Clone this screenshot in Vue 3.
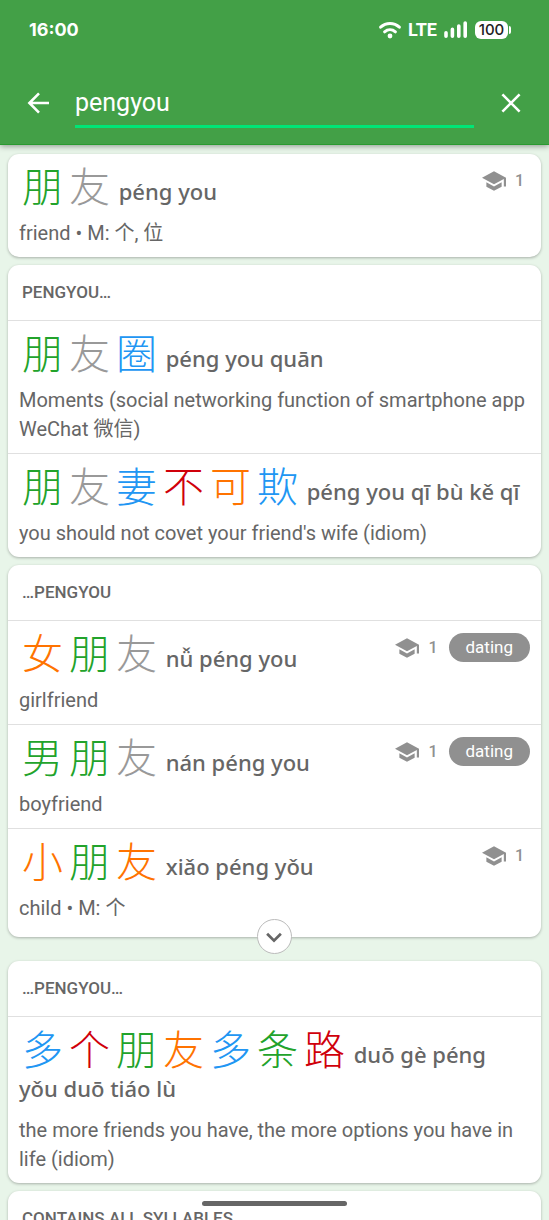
<script setup>
import { ref } from 'vue'

const query = ref('pengyou')

const peng = ['朋', 't2']
const you = ['友', 't5']

const groups = [
  {
    title: '',
    entries: [{ hanzi: [peng, you], pinyin: 'péng you', meaning: 'friend • M: 个, 位', level: 1 }]
  },
  {
    title: 'PENGYOU…',
    entries: [
      {
        hanzi: [peng, you, ['圈', 't1']],
        pinyin: 'péng you quān',
        meaning: 'Moments (social networking function of smartphone app WeChat 微信)'
      },
      {
        hanzi: [peng, you, ['妻', 't1'], ['不', 't4'], ['可', 't3'], ['欺', 't1']],
        pinyin: 'péng you qī bù kě qī',
        meaning: "you should not covet your friend's wife (idiom)"
      }
    ]
  },
  {
    title: '…PENGYOU',
    expandable: true,
    entries: [
      { hanzi: [['女', 't3'], peng, you], pinyin: 'nǚ péng you', meaning: 'girlfriend', level: 1, tag: 'dating' },
      { hanzi: [['男', 't2'], peng, you], pinyin: 'nán péng you', meaning: 'boyfriend', level: 1, tag: 'dating' },
      { hanzi: [['小', 't3'], peng, ['友', 't3']], pinyin: 'xiǎo péng yǒu', meaning: 'child • M: 个', level: 1 }
    ]
  },
  {
    title: '…PENGYOU…',
    entries: [
      {
        hanzi: [['多', 't1'], ['个', 't4'], peng, ['友', 't3'], ['多', 't1'], ['条', 't2'], ['路', 't4']],
        pinyin: 'duō gè péng yǒu duō tiáo lù',
        meaning: 'the more friends you have, the more options you have in life (idiom)'
      }
    ]
  },
  { title: 'CONTAINS ALL SYLLABLES', entries: [] }
]
</script>

<template>
  <div class="app">
    <header class="top">
      <div class="status">
        <span class="clock">16:00</span>
        <div class="indicators">
          <svg class="wifi" viewBox="0 0 24 18" aria-hidden="true">
            <path d="M2.6 6.2C8 1.2 16 1.2 21.4 6.2" />
            <path d="M6.6 10.8C9.8 8 14.2 8 17.4 10.8" />
            <circle cx="12" cy="15" r="2.4" />
          </svg>
          <span class="network">LTE</span>
          <svg class="signal" viewBox="0 0 24 18" aria-hidden="true">
            <path d="M2 11.8V15.2M8.4 8.4V15.2M14.8 5V15.2M21.2 2V15.2" />
          </svg>
          <span class="battery">100</span>
        </div>
      </div>
      <form class="search" role="search" @submit.prevent>
        <button type="button" class="icon" aria-label="Back">
          <svg viewBox="0 0 24 24"><path d="M23 12H3.5M13 2.4L3.4 12L13 21.6" /></svg>
        </button>
        <input v-model="query" class="field" type="text" aria-label="Search" />
        <button type="button" class="icon" aria-label="Clear" @click="query = ''">
          <svg viewBox="0 0 24 24"><path d="M3.4 3.4L20.6 20.6M20.6 3.4L3.4 20.6" /></svg>
        </button>
      </form>
    </header>

    <main class="results">
      <section v-for="(group, g) in groups" :key="g" class="card" :class="{ expandable: group.expandable }">
        <h2 v-if="group.title" class="heading">{{ group.title }}</h2>
        <article v-for="(entry, e) in group.entries" :key="e" class="entry">
          <div class="main">
            <h3 class="word">
              <span v-for="(h, i) in entry.hanzi" :key="i" class="hanzi" :class="h[1]" lang="zh">{{ h[0] }}</span>
              {{ entry.pinyin }}
            </h3>
            <div v-if="entry.level" class="meta">
              <svg class="cap" viewBox="1 3 22 18" aria-hidden="true">
                <path d="M5 13.18v4L12 21l7-3.82v-4L12 17l-7-3.82zM12 3L1 9l11 6 9-4.91V17h2V9L12 3z" />
              </svg>
              <span class="level">{{ entry.level }}</span>
              <a v-if="entry.tag" href="#" class="tag">{{ entry.tag }}</a>
            </div>
          </div>
          <p class="meaning">{{ entry.meaning }}</p>
        </article>
        <button v-if="group.expandable" type="button" class="more" aria-label="Show more">
          <svg viewBox="0 0 24 24"><path d="M4.5 8.5L12 16L19.5 8.5" /></svg>
        </button>
      </section>
    </main>
    <div class="home"></div>
  </div>
</template>

<style>
body {
  background: #e8f5e9;
}
</style>

<style scoped>
.app {
  height: 100vh;
  display: flex;
  flex-direction: column;
  overflow: hidden;
  background: #e8f5e9;
  color: #666;
  font-family: Roboto, 'Noto Sans', 'Noto Sans CJK SC', sans-serif;
}
.top {
  flex: none;
  position: relative;
  box-sizing: border-box;
  height: 145px;
  background: #43a047;
  border-bottom: 1px solid #2a9a30;
  color: #fff;
  box-shadow: 0 1px 6px rgba(0, 0, 0, 0.4);
}
.status {
  height: 60px;
  padding: 0 41px 0 29px;
  display: flex;
  align-items: center;
  justify-content: space-between;
}
.clock {
  font: 700 18px/24px Inter, Roboto, sans-serif;
}
.indicators {
  display: flex;
  align-items: center;
}
svg {
  display: block;
  fill: none;
  stroke: currentColor;
  stroke-width: 2.6;
}
.wifi {
  width: 24px;
  height: 18px;
  stroke-linecap: round;
  stroke-width: 3;
}
.wifi circle {
  fill: currentColor;
  stroke: none;
}
.network {
  margin: 0 7px 0 6px;
  font: 700 18px/24px Roboto, sans-serif;
}
.signal {
  width: 24px;
  height: 18px;
  stroke-width: 3.6;
  stroke-linecap: round;
}
.battery {
  position: relative;
  margin-left: 7px;
  width: 33px;
  border-radius: 6px;
  background: #fff;
  color: #222;
  font: 500 15px/18px Inter, Roboto, sans-serif;
  text-align: center;
}
.battery::after {
  content: '';
  position: absolute;
  left: 34px;
  top: 5px;
  width: 2px;
  height: 8px;
  border-radius: 0 2px 2px 0;
  background: #fff;
}
.search {
  display: flex;
  align-items: center;
  padding: 18px 26px 0;
}
.icon {
  flex: none;
  padding: 0;
  border: 0;
  background: none;
  color: #fff;
}
.icon svg {
  width: 24px;
  height: 24px;
}
.field {
  flex: 1;
  min-width: 0;
  height: 50px;
  box-sizing: border-box;
  margin: 0 25px;
  padding: 2px 0 0;
  border: 0;
  border-bottom: 3px solid #00e676;
  outline: 0;
  background: none;
  color: #fff;
  font: 400 25px/32px Roboto, sans-serif;
}
.results {
  flex: 1;
  min-height: 0;
  overflow-y: auto;
  scrollbar-width: none;
  padding: 9px 8px 0;
  display: flex;
  flex-direction: column;
  gap: 8px;
}
.card {
  flex: none;
  position: relative;
  background: #fff;
  border-radius: 11px;
  box-shadow: 0 1px 3px rgba(0, 0, 0, 0.28);
}
.expandable {
  padding-bottom: 5px;
  margin-bottom: 16px;
}
.heading {
  margin: 0;
  padding: 0 14px;
  font-size: 17px;
  font-weight: 500;
  line-height: 55px;
}
.entry {
  padding: 8px 11px 9px;
}
.heading + .entry,
.entry + .entry {
  border-top: 1px solid #e0e0e0;
}
.main {
  display: flex;
  align-items: flex-start;
}
.word {
  flex: 1;
  margin: 0;
  font: 500 22px/34px 'Noto Sans', Roboto, sans-serif;
}
.hanzi {
  display: inline-block;
  width: 47px;
  font: 300 41px/44px 'Noto Sans CJK SC', sans-serif;
  text-align: center;
  vertical-align: -2px;
}
.t1 { color: #2196f3; }
.t2 { color: #22a32b; }
.t3 { color: #ff7300; }
.t4 { color: #d0000a; }
.t5 { color: #999; }
.meta {
  flex: none;
  height: 29px;
  margin-top: 4px;
  display: flex;
  align-items: center;
  color: #909090;
}
.cap {
  width: 24px;
  height: 20px;
  fill: currentColor;
  stroke: none;
}
.level {
  margin: 0 6px 0 9px;
  font-size: 16px;
  font-weight: 500;
}
.tag {
  margin-left: 5px;
  padding: 0 17px;
  border-radius: 15px;
  background: #909090;
  color: #fff;
  font-size: 17px;
  line-height: 29px;
  text-decoration: none;
}
.meaning {
  margin: 11px 0 0;
  font-size: 20px;
  line-height: 29px;
}
.more {
  position: absolute;
  left: 50%;
  bottom: -17px;
  width: 35px;
  height: 35px;
  margin-left: -18px;
  padding: 0;
  display: grid;
  place-items: center;
  border: 1px solid #bbb;
  border-radius: 50%;
  background: #fff;
  color: #666;
}
.more svg {
  width: 22px;
  height: 22px;
  stroke-width: 3;
}
.home {
  position: fixed;
  left: 50%;
  bottom: 14px;
  width: 145px;
  height: 5px;
  margin-left: -73px;
  border-radius: 3px;
  background: #666;
}
</style>
